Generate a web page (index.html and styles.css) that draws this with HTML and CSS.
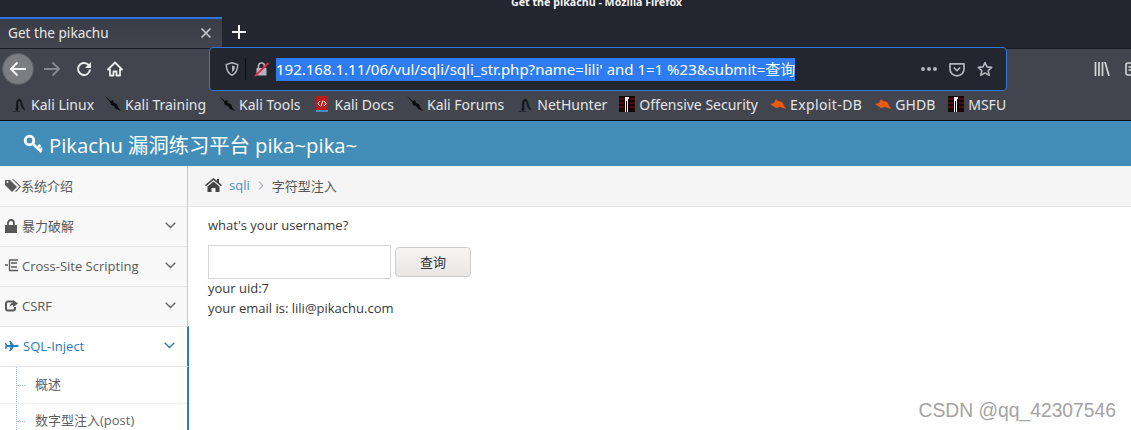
FILE: index.html
```html
<!DOCTYPE html>
<html lang="en">
<head>
<meta charset="utf-8">
<title>Get the pikachu</title>
<link rel="stylesheet" href="styles.css">
</head>
<body>
<header class="chrome">
  <div class="titlebar"><span class="wintitle">Get the pikachu - Mozilla Firefox</span></div>
  <div class="tabstrip">
    <div class="tab">
      <span class="tab-title">Get the pikachu</span>
      <svg class="tab-close" width="12" height="12" viewBox="0 0 12 12"><path d="M1.500 1.500l9 9M10.500 1.500l-9 9" stroke="#c8cace" stroke-width="1.600"/></svg>
    </div>
    <svg class="newtab" width="14" height="14" viewBox="0 0 14 14"><path d="M7 0v14M0 7h14" stroke="#f2f2f3" stroke-width="2"/></svg>
  </div>
  <div class="toolbar">
    <div class="backbtn"><svg width="18" height="16" viewBox="0 0 18 16"><path d="M17 8H2M8.500 1.500L2 8l6.500 6.500" fill="none" stroke="#f4f4f5" stroke-width="2"/></svg></div>
    <svg class="tool fwd" width="18" height="16" viewBox="0 0 18 16"><path d="M1 8h15M9.500 1.500L16 8l-6.500 6.500" fill="none" stroke="#85878d" stroke-width="2"/></svg>
    <svg class="tool reload" width="16" height="16" viewBox="0 0 16 16"><path d="M14 8.500A6 6 0 1 1 12 3.500L14.500 6" fill="none" stroke="#ececee" stroke-width="2"/><path d="M15 1v6H9z" fill="#ececee"/></svg>
    <svg class="tool home" width="16" height="16" viewBox="0 0 16 16"><path d="M8 1.500L1 8.500h2v6h3.500v-4h3v4H13v-6h2z" fill="none" stroke="#ececee" stroke-width="1.800" stroke-linejoin="round"/></svg>
    <div class="urlbar">
      <svg class="shield" width="14" height="14" viewBox="0 0 14 14"><path d="M7 .8l5.700 1.700c0 5-1.500 8.800-5.700 10.700C2.800 11.300 1.300 7.500 1.300 2.500z" fill="none" stroke="#b4b5ba" stroke-width="1.500"/><path d="M7 3.500l3 .9c0 2.600-.9 4.400-3 5.600z" fill="#b4b5ba"/></svg>
      <span class="sep"></span>
      <svg class="lock" width="16" height="16" viewBox="0 0 16 16"><path d="M2.500 7h10v7.500h-10z" fill="#b4b5ba"/><path d="M4.500 7V5a3 3 0 0 1 6 0v2" fill="none" stroke="#b4b5ba" stroke-width="1.600"/><path d="M1 15L14.500 2" stroke="#e22850" stroke-width="1.800"/></svg>
      <span class="url">192.168.1.11/06/vul/sqli/sqli_str.php?name=lili' and 1=1 %23&amp;submit=查询</span>
      <span class="url-actions">
        <span class="dots"><i></i><i></i><i></i></span>
        <svg width="16" height="15" viewBox="0 0 16 15"><path d="M1 1.800h14v5.500a7 6.500 0 0 1-14 0z" fill="none" stroke="#b4b5ba" stroke-width="1.700" stroke-linejoin="round"/><path d="M4.800 5.500L8 8.500l3.200-3" fill="none" stroke="#b4b5ba" stroke-width="1.700"/></svg>
        <svg width="16" height="16" viewBox="0 0 16 16"><path d="M8 1.500l2 4.400 4.700.5-3.500 3.200 1 4.700L8 11.900l-4.200 2.400 1-4.700L1.300 6.400 6 5.900z" fill="none" stroke="#b4b5ba" stroke-width="1.600" stroke-linejoin="round"/></svg>
      </span>
    </div>
    <svg class="library" width="16" height="14" viewBox="0 0 16 14"><path d="M1.500 0v14M5 0v14M8.500 0v14M11 0l4 14" stroke="#d5d6d9" stroke-width="1.700" fill="none"/></svg>
    <svg class="sidebar-btn" width="6" height="14" viewBox="0 0 6 14"><path d="M8 1H3a2 2 0 0 0-2 2v8a2 2 0 0 0 2 2h5M3.500 5H8M3.500 8H8" stroke="#d5d6d9" stroke-width="1.600" fill="none"/></svg>
  </div>
  <nav class="bookmarks">
    <a class="bm bm1"><svg class="ic" width="16" height="16" viewBox="0 0 16 16"><path d="M2 15.500h7M4.500 14c1-1.500 1-3 .8-5C5 6 6.500 3 8.500 3c1.500 0 2 3 3 6 .5 1.500 1.500 3 2.500 5-1.500-.5-3-2-3.800-4.500C10 7 9.500 5 8.500 5 7.300 5 6.700 7 7 10c.2 2 .5 4-1 5z" fill="#15161a" stroke="#15161a" stroke-width=".5"/></svg>Kali Linux</a>
    <a class="bm bm2"><svg class="ic" width="16" height="16" viewBox="0 0 16 16"><path d="M0 0l6 5 2-1 1 3 3 1 1 3 3 4-5-2-2-3-3-1-1-3z" fill="#0b0b0d"/></svg>Kali Training</a>
    <a class="bm bm3"><svg class="ic" width="16" height="16" viewBox="0 0 16 16"><path d="M0 0l6 5 2-1 1 3 3 1 1 3 3 4-5-2-2-3-3-1-1-3z" fill="#0b0b0d"/></svg>Kali Tools</a>
    <a class="bm bm4"><svg class="ic ic-docs" width="14" height="16" viewBox="0 0 14 16"><path d="M1 0h12v16H1z" fill="#b61c1c"/><path d="M1 14h12v2H1z" fill="#4a8ac0"/><path d="M5 5L3 7.500 5 10M9 5l2 2.500L9 10M8 4.500l-2 6" stroke="#fff" stroke-width="1" fill="none"/></svg>Kali Docs</a>
    <a class="bm bm5"><svg class="ic" width="16" height="16" viewBox="0 0 16 16"><path d="M0 0l6 5 2-1 1 3 3 1 1 3 3 4-5-2-2-3-3-1-1-3z" fill="#0b0b0d"/></svg>Kali Forums</a>
    <a class="bm bm6"><svg class="ic" width="16" height="16" viewBox="0 0 16 16"><path d="M2 15.500h7M4.500 14c1-1.500 1-3 .8-5C5 6 6.500 3 8.500 3c1.500 0 2 3 3 6 .5 1.500 1.500 3 2.500 5-1.500-.5-3-2-3.800-4.500C10 7 9.500 5 8.500 5 7.300 5 6.700 7 7 10c.2 2 .5 4-1 5z" fill="#15161a" stroke="#15161a" stroke-width=".5"/></svg>NetHunter</a>
    <a class="bm bm7"><svg class="ic" width="16" height="16" viewBox="0 0 16 16"><path d="M0 0h16v16H0z" fill="#1a0606"/><path d="M0 3h5M0 7h5M0 11h5M11 3h5M11 7h5M11 11h5" stroke="#6c1a1a"/><path d="M6 1h4v2H9v13H8V5H7v11H6z" fill="#eee"/></svg>Offensive Security</a>
    <a class="bm bm8"><svg class="ic" width="16" height="16" viewBox="0 0 16 16"><path d="M0 8l4-1 2-4 2 2 4 1 4 7-6-2-4 1z" fill="#ea5b13"/></svg><span class="wide">Exploit-DB</span></a>
    <a class="bm bm9"><svg class="ic" width="16" height="16" viewBox="0 0 16 16"><path d="M0 8l4-1 2-4 2 2 4 1 4 7-6-2-4 1z" fill="#ea5b13"/></svg>GHDB</a>
    <a class="bm"><svg class="ic" width="16" height="16" viewBox="0 0 16 16"><path d="M0 0h16v16H0z" fill="#1a0606"/><path d="M0 3h5M0 7h5M0 11h5M11 3h5M11 7h5M11 11h5" stroke="#6c1a1a"/><path d="M6 1h4v2H9v13H8V5H7v11H6z" fill="#eee"/></svg>MSFU</a>
  </nav>
</header>

<div class="page">
  <div class="brand">
    <svg class="key" width="20" height="20" viewBox="0 0 20 20"><circle cx="6.500" cy="6.500" r="4.300" fill="none" stroke="#fff" stroke-width="2.800"/><path d="M9.500 9.500l9 8.500M14.500 13.800l2.800-2.800M17 16l2-2" fill="none" stroke="#fff" stroke-width="2.500"/></svg>
    <span>Pikachu 漏洞练习平台 pika~pika~</span>
  </div>
  <div class="main">
    <aside class="side">
      <div class="item"><svg class="mi" width="16" height="13" viewBox="0 0 16 13"><path d="M0 1v5l7 7 5-5-7-7z" fill="#585858"/><path d="M7 0l7.500 7.500L10 12.500l1 .5 5-5.500L8 0z" fill="#585858"/><circle cx="2.500" cy="3" r="1" fill="#f8f8f8"/></svg><span class="lbl">系统介绍</span></div>
      <div class="item"><svg class="mi" width="12" height="14" viewBox="0 0 12 14"><path d="M0 6h12v8H0z" fill="#585858"/><path d="M3 6V4a3 3 0 0 1 6 0v2" fill="none" stroke="#585858" stroke-width="1.800"/></svg><span class="lbl lbl-gap">暴力破解</span><svg class="chev" width="11" height="7" viewBox="0 0 11 7"><path d="M.7.700l4.800 4.800L10.300.700" fill="none" stroke="#666" stroke-width="1.400"/></svg></div>
      <div class="item"><svg class="mi" width="13" height="13" viewBox="0 0 13 13"><path d="M0 6h3M4 1h9M6 4h6M6 8h6M4 11.500h9M4.500 1v10.500" stroke="#585858" stroke-width="1.300" fill="none"/></svg><span class="lbl lbl-gap2">Cross-Site Scripting</span><svg class="chev" width="11" height="7" viewBox="0 0 11 7"><path d="M.7.700l4.800 4.800L10.300.700" fill="none" stroke="#666" stroke-width="1.400"/></svg></div>
      <div class="item"><svg class="mi" width="13" height="12" viewBox="0 0 13 12"><path d="M8 1.500H3A2 2 0 0 0 1 3.500v5a2 2 0 0 0 2 2h5a2 2 0 0 0 2-2V7" fill="none" stroke="#585858" stroke-width="2"/><path d="M8 0l5 3.500L8 7V5C6 5 5 6 4.500 8c0-3 1-5 3.500-5.500z" fill="#585858"/></svg><span class="lbl lbl-gap2">CSRF</span><svg class="chev" width="11" height="7" viewBox="0 0 11 7"><path d="M.7.700l4.800 4.800L10.300.700" fill="none" stroke="#666" stroke-width="1.400"/></svg></div>
      <div class="item item-active"><svg class="mi" width="14" height="10" viewBox="0 0 14 10"><path d="M0 2h1.200l1 2h3.300L4.300 0h1.500l3 4h3.700c1.500 0 1.500 2 0 2H8.800l-3 4H4.300l1.200-4H2.200l-1 2H0l.5-3z" fill="#2b7dbc"/></svg><span class="lbl lbl-gap3">SQL-Inject</span><svg class="chev" width="11" height="7" viewBox="0 0 11 7"><path d="M.7.700l4.800 4.800L10.300.700" fill="none" stroke="#2b7dbc" stroke-width="1.400"/></svg></div>
      <ul class="sub">
        <li>概述</li>
        <li>数字型注入(post)</li>
      </ul>
    </aside>
    <main class="content">
      <div class="crumbs">
        <svg class="homeico" width="17" height="14" viewBox="0 0 17 14"><path d="M8.500 0L0 7l1 1.300L8.500 2l7.500 6.300L17 7l-3-2.500V1h-2v1.800z" fill="#444"/><path d="M2.500 8.500L8.500 3.500l6 5V14h-4v-4h-4v4h-4z" fill="#444"/></svg>
        <a class="crumb-link">sqli</a>
        <svg class="crumb-sep" width="6" height="9" viewBox="0 0 6 9"><path d="M1 .7l3.800 3.800L1 8.300" fill="none" stroke="#b2b6bf" stroke-width="1.200"/></svg>
        <span class="crumb-cur">字符型注入</span>
      </div>
      <div class="body">
        <p class="q">what's your username?</p>
        <form class="form">
          <input class="field" type="text">
          <button class="btn" type="button">查询</button>
        </form>
        <p class="line line-first">your uid:7</p>
        <p class="line">your email is: lili@pikachu.com</p>
      </div>
    </main>
  </div>
  <div class="watermark">CSDN @qq_42307546</div>
</div>
</body>
</html>
```

FILE: styles.css
```css
* { box-sizing: border-box; }
html, body { margin: 0; padding: 0; }
body {
  width: 1131px;
  height: 430px;
  overflow: hidden;
  background: #fff;
  font-family: "Open Sans", "Noto Sans CJK SC", sans-serif;
  color: #393939;
}
.chrome {
  height: 121px;
  background: #23252f;
  border-bottom: 1px solid #0c0c0d;
  display: flex;
  flex-direction: column;
  font-family: "Noto Sans", "Noto Sans CJK SC", sans-serif;
}
.titlebar {
  height: 17px;
  display: flex;
  justify-content: center;
  padding-left: 62px;
  overflow: hidden;
}
.wintitle {
  color: #f4f4f5;
  font-size: 10.700px;
  font-weight: 700;
  line-height: 12px;
  margin-top: -4px;
  white-space: nowrap;
}
.tabstrip {
  height: 31px;
  display: flex;
  align-items: stretch;
}
.tab {
  width: 222px;
  background: linear-gradient(#3b3d46, #42454e);
  border-top: 2px solid #2a75e0;
  display: flex;
  align-items: center;
  padding: 0 10px 0 8px;
  color: #e6e7e9;
  font-size: 13.600px;
}
.tab-title { flex: 1; margin-top: -2px; }
.tab-close { margin-top: -1px; }
.newtab { margin: 8px 0 0 10px; }
.toolbar {
  height: 42px;
  background: #42454e;
  box-shadow: inset 0 1px #1b1c22;
  display: flex;
  align-items: center;
}
.backbtn {
  flex: none;
  width: 32px;
  height: 32px;
  margin-left: 2px;
  border-radius: 50%;
  background: #7b7d83;
  border: 1px solid #5c5e64;
  display: flex;
  align-items: center;
  justify-content: center;
}
.tool { flex: none; }
.fwd { margin-left: 9px; }
.reload { margin-left: 15px; }
.home { margin-left: 15px; }
.urlbar {
  flex: none;
  width: 798px;
  height: 44px;
  margin-left: 86px;
  background: #23252f;
  border: 1px solid #2a75e0;
  border-radius: 4px;
  display: flex;
  align-items: center;
  padding: 0 13px 0 15px;
  position: relative;
  z-index: 1;
}
.shield { flex: none; }
.sep { width: 1px; height: 22px; background: #0d0e12; margin: 0 8px 0 6px; }
.lock { flex: none; }
.url {
  margin-left: 6px;
  background: #2e7cf0;
  color: #fff;
  font-size: 15px;
  line-height: 23px;
  white-space: nowrap;
}
.url-actions {
  margin-left: auto;
  display: flex;
  align-items: center;
  gap: 12px;
}
.dots { display: flex; gap: 2px; }
.dots i { width: 4px; height: 4px; border-radius: 50%; background: #b4b5ba; }
.library { margin-left: 87px; flex: none; }
.sidebar-btn { margin-left: 15px; flex: none; }
.bookmarks {
  height: 30px;
  background: #42454e;
  display: flex;
  align-items: center;
  padding: 0 0 2px 11px;
  font-size: 14px;
  color: #e4e5e8;
  white-space: nowrap;
}
.bm { display: flex; align-items: center; }
.ic { flex: none; margin-right: 4px; }
.ic-docs { margin-right: 5px; }
.wide { letter-spacing: .4px; }
.bm1 { margin-right: 11px; }
.bm2 { margin-right: 13px; }
.bm3 { margin-right: 15px; }
.bm4 { margin-right: 13px; }
.bm5 { margin-right: 13px; }
.bm6 { margin-right: 12px; }
.bm7 { margin-right: 12px; }
.bm8 { margin-right: 13px; }
.bm9 { margin-right: 13px; }
.page { position: relative; }
.brand {
  height: 45px;
  background: #438eb9;
  display: flex;
  align-items: center;
  padding-left: 23px;
  color: #fff;
  font-size: 20.300px;
  gap: 6px;
}
.main { display: flex; }
.side {
  width: 188px;
  flex: none;
  background: #f8f8f8;
  border-right: 1px solid #ccc;
  height: 264px;
  font-size: 13px;
  color: #585858;
}
.item {
  height: 40px;
  display: flex;
  align-items: center;
  padding: 0 11px 2px 5px;
  background: #f8f8f8;
  border-top: 1px solid #e5e5e5;
}
.item:first-child { border-top: 0; }
.mi { flex: none; }
.lbl-gap { margin-left: 5px; }
.lbl-gap2 { margin-left: 4px; }
.lbl-gap3 { margin-left: 4px; }
.lbl { flex: 1; }
.chev { flex: none; }
.item-active {
  background: #fff;
  color: #2b7dbc;
  margin-right: -2px;
  padding-right: 12px;
  border-right: 2px solid #2b7dbc;
}
.sub {
  list-style: none;
  margin: 0 -2px 0 0;
  padding: 0;
  background: #fff;
  border-top: 1px solid #e5e5e5;
  border-right: 2px solid #2b7dbc;
  height: 64px;
  overflow: hidden;
  position: relative;
  color: #616161;
}
.sub::before {
  content: "";
  position: absolute;
  left: 16px;
  top: 0;
  bottom: 0;
  border-left: 1px dotted #9dbdd6;
}
.sub li {
  height: 37px;
  line-height: 35px;
  padding-left: 35px;
  border-bottom: 1px dotted #e4e4e4;
  position: relative;
}
.sub li + li { margin-top: -1px; }
.sub li::before {
  content: "";
  position: absolute;
  left: 17px;
  top: 18px;
  width: 8px;
  border-top: 1px dotted #9dbdd6;
}
.sub li:last-child { border-bottom: 0; }
.content { flex: 1; min-width: 0; font-size: 13px; }
.crumbs {
  height: 41px;
  background: #f5f5f5;
  border-bottom: 1px solid #e5e5e5;
  display: flex;
  align-items: center;
  padding: 0 0 2px 17px;
}
.homeico { flex: none; margin-right: 7px; }
.crumb-link { color: #4c8fbd; font-size: 13px; }
.crumb-sep { margin: 0 8px 0 8px; flex: none; }
.crumb-cur { color: #555; font-size: 13px; }
.body { padding: 8px 20px; }
.q { margin: 0; line-height: 20px; }
.form { display: flex; align-items: center; gap: 4px; margin-top: 10px; }
.field {
  width: 183px;
  height: 34px;
  border: 1px solid #d5d5d5;
  background: #fff;
  margin: 0;
}
.btn {
  width: 76px;
  height: 30px;
  border: 1px solid #cfcdc9;
  border-radius: 4px;
  background: linear-gradient(#f6f5f4, #e9e7e5);
  color: #333;
  font-family: "Noto Sans CJK SC", sans-serif;
  font-size: 13px;
  padding: 0 0 2px;
}
.line { margin: 0; line-height: 20px; }
.line-first { margin-top: -1px; }
.watermark {
  position: absolute;
  right: 15px;
  top: 279px;
  font-family: "Liberation Sans", sans-serif;
  font-size: 19.300px;
  line-height: 22px;
  color: #a3a3a3;
}
```
